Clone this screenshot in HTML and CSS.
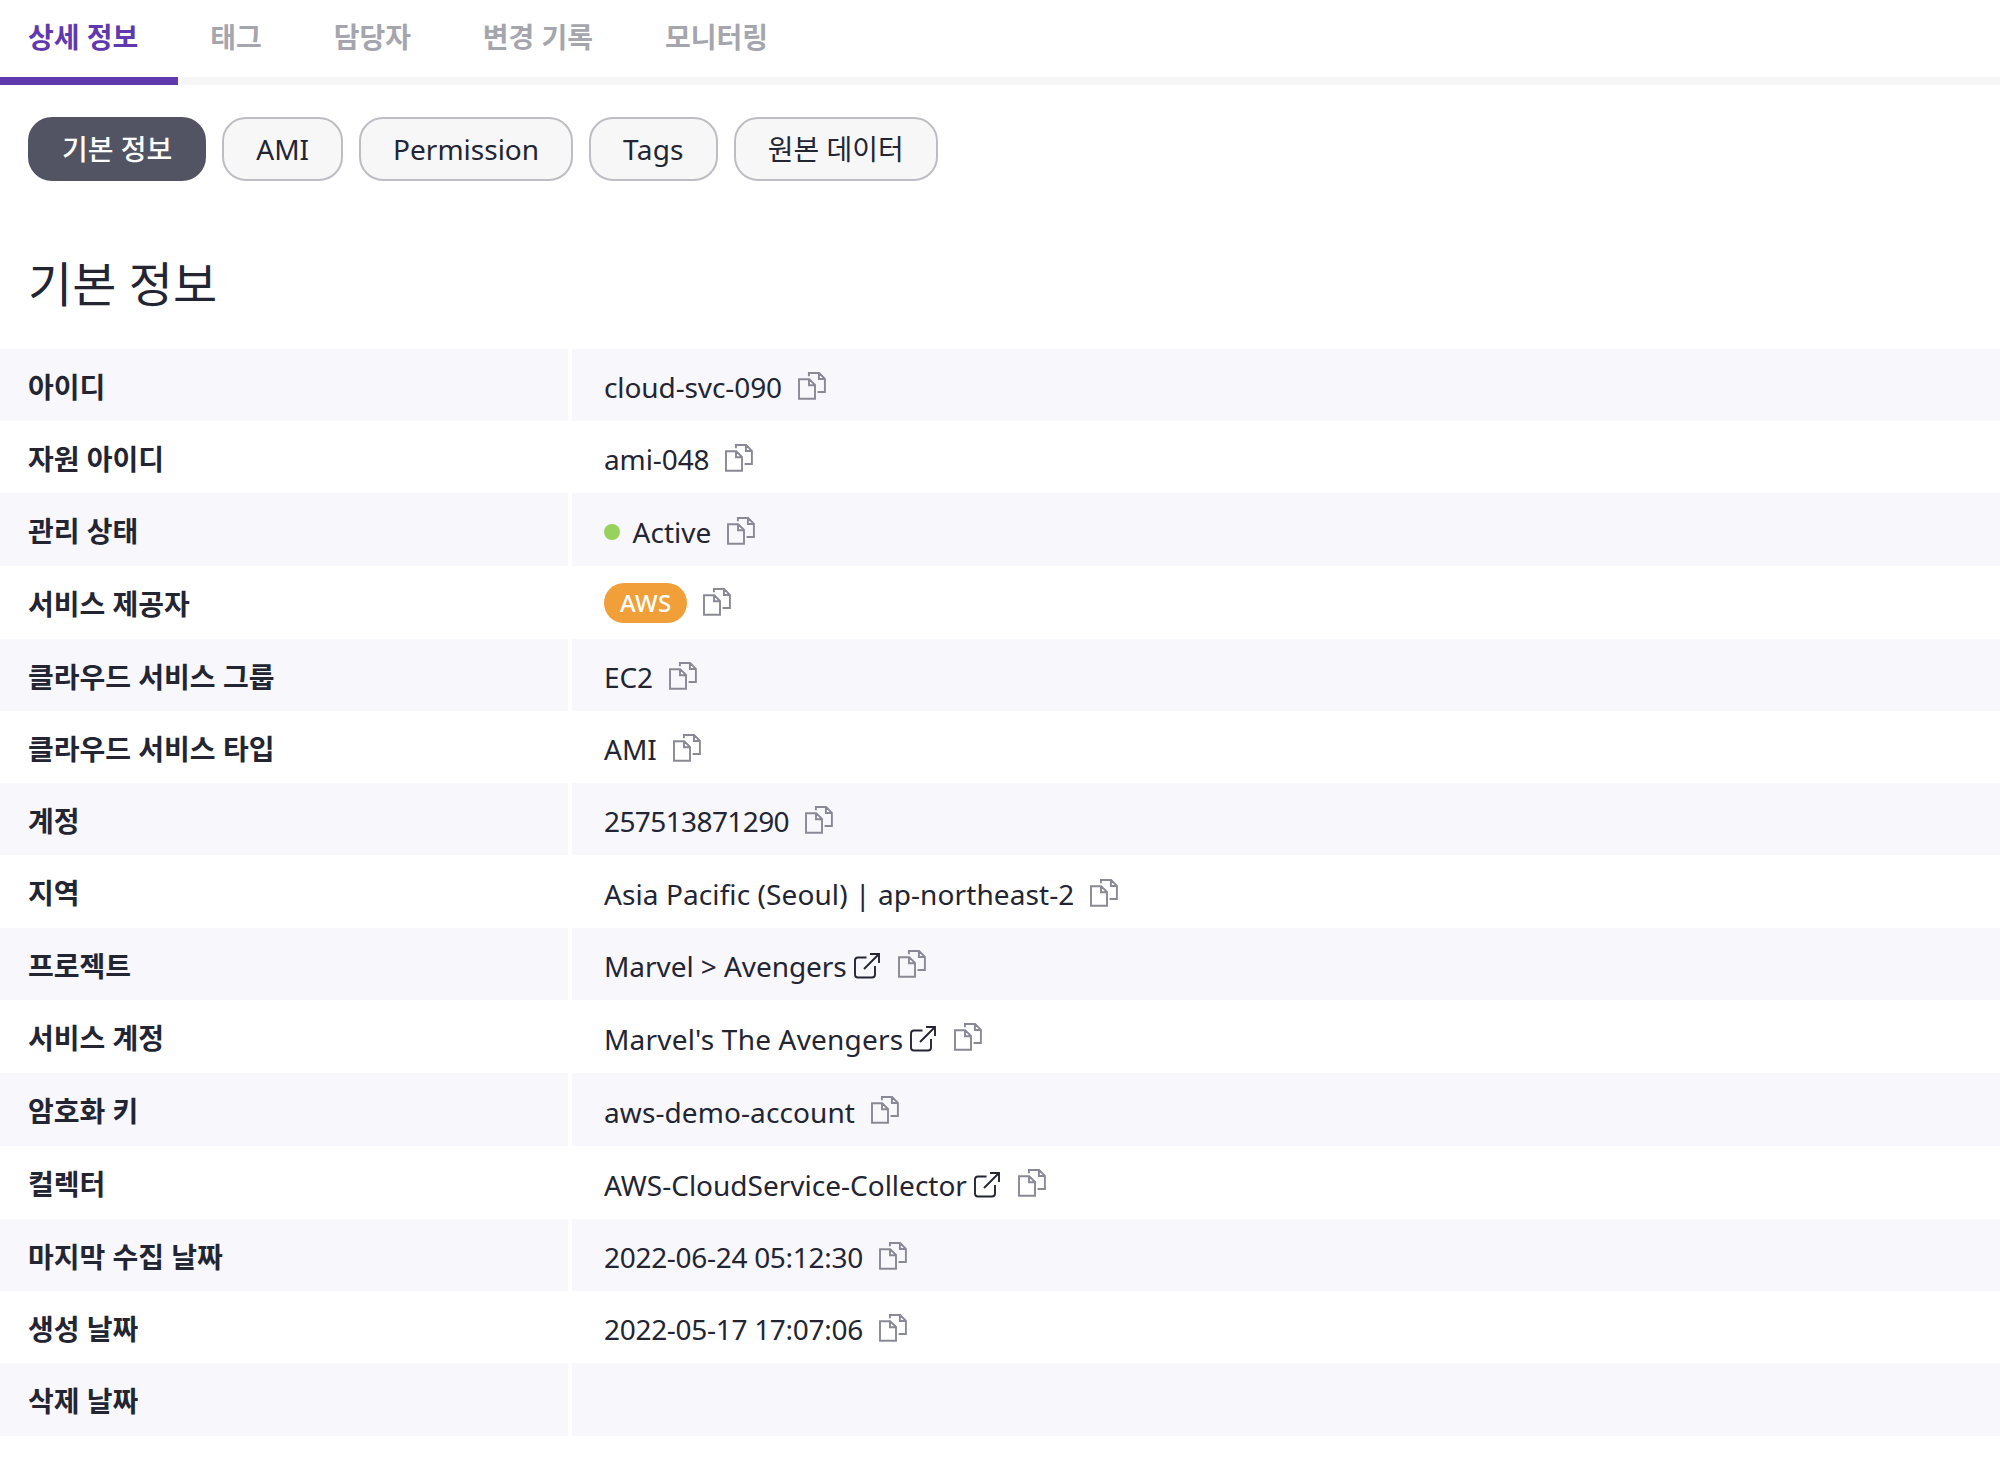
FILE: index.html
```html
<!DOCTYPE html>
<html lang="ko">
<head>
<meta charset="utf-8">
<title>기본 정보</title>
<link rel="stylesheet" href="styles.css">
</head>
<body>
<svg class="sprite" aria-hidden="true">
  <symbol id="copy" viewBox="0 0 28 28">
    <path d="M10.9 4.3V1H21.1L26.9 6.8V20H19.6M20.9 1.3V7H26.6M1 7.2H11.2L17 13V26.7H1ZM11 7.5V13.2H16.7" fill="none" stroke="currentColor" stroke-width="1.9"/>
  </symbol>
  <symbol id="ext" viewBox="0 0 26 26">
    <path d="M12.5 4.5H4Q1 4.5 1 7.5V21.5Q1 24.5 4 24.5H18Q21 24.5 21 21.5V13M16 1H25V10M25 1L10 16" fill="none" stroke="currentColor" stroke-width="1.9"/>
  </symbol>
</svg>
<nav class="tabs">
  <a class="tab active">상세 정보</a><a class="tab">태그</a><a class="tab">담당자</a><a class="tab">변경 기록</a><a class="tab">모니터링</a>
</nav>
<div class="pills">
  <button class="pill selected">기본 정보</button>
  <button class="pill">AMI</button>
  <button class="pill">Permission</button>
  <button class="pill tags">Tags</button>
  <button class="pill">원본 데이터</button>
</div>
<h1 class="title">기본 정보</h1>
<dl class="table">
  <div class="row"><dt>아이디</dt><dd><span class="mixed">cloud-svc-090</span><svg class="copy"><use href="#copy"/></svg></dd></div>
  <div class="row"><dt>자원 아이디</dt><dd><span class="mixed">ami-048</span><svg class="copy"><use href="#copy"/></svg></dd></div>
  <div class="row tall"><dt>관리 상태</dt><dd><i class="dot"></i><span>Active</span><svg class="copy"><use href="#copy"/></svg></dd></div>
  <div class="row tall"><dt>서비스 제공자</dt><dd class="provider"><span class="badge">AWS</span><svg class="copy"><use href="#copy"/></svg></dd></div>
  <div class="row"><dt>클라우드 서비스 그룹</dt><dd><span class="mixed">EC2</span><svg class="copy"><use href="#copy"/></svg></dd></div>
  <div class="row"><dt>클라우드 서비스 타입</dt><dd><span>AMI</span><svg class="copy"><use href="#copy"/></svg></dd></div>
  <div class="row"><dt>계정</dt><dd><span class="number">257513871290</span><svg class="copy"><use href="#copy"/></svg></dd></div>
  <div class="row tall"><dt>지역</dt><dd><span class="wide">Asia Pacific (Seoul) | ap-northeast-2</span><svg class="copy"><use href="#copy"/></svg></dd></div>
  <div class="row"><dt>프로젝트</dt><dd class="raised"><span class="narrow">Marvel &gt; Avengers</span><svg class="ext"><use href="#ext"/></svg><svg class="copy"><use href="#copy"/></svg></dd></div>
  <div class="row tall"><dt>서비스 계정</dt><dd class="raised"><span class="wider">Marvel's The Avengers</span><svg class="ext"><use href="#ext"/></svg><svg class="copy"><use href="#copy"/></svg></dd></div>
  <div class="row tall"><dt>암호화 키</dt><dd class="raised"><span class="wide">aws-demo-account</span><svg class="copy"><use href="#copy"/></svg></dd></div>
  <div class="row tall"><dt>컬렉터</dt><dd class="raised"><span>AWS-CloudService-Collector</span><svg class="ext"><use href="#ext"/></svg><svg class="copy"><use href="#copy"/></svg></dd></div>
  <div class="row"><dt>마지막 수집 날짜</dt><dd><span class="date">2022-06-24 05:12:30</span><svg class="copy"><use href="#copy"/></svg></dd></div>
  <div class="row"><dt>생성 날짜</dt><dd><span class="date">2022-05-17 17:07:06</span><svg class="copy"><use href="#copy"/></svg></dd></div>
  <div class="row tall"><dt>삭제 날짜</dt><dd></dd></div>
</dl>
</body>
</html>
```

FILE: styles.css
```css
* { box-sizing: border-box; }
body {
  margin: 0;
  height: 1458px;
  overflow: hidden;
  background: #fff;
  color: #232533;
  font-family: "Noto Sans", "Noto Sans CJK KR", sans-serif;
  font-size: 28px;
}
.sprite { display: none; }
svg { flex: none; }
.tabs {
  display: flex;
  height: 85px;
  box-shadow: inset 0 -8px #f7f7f7;
}
.tab {
  padding: 0 40px 0 31.9px;
  line-height: 75px;
  font-weight: 700;
  color: #a5a5ad;
}
.tab.active {
  height: 85px;
  padding-left: 28px;
  color: #6039ae;
  border-bottom: 8px solid #6039ae;
}
.pills {
  display: flex;
  gap: 16px;
  padding: 32px 28px 0;
}
.pill {
  height: 64px;
  padding: 0 32px;
  border: 2px solid #bdbdc4;
  border-radius: 24px;
  background: #f7f7f7;
  color: #232533;
  font: inherit;
  line-height: 60px;
}
.pill.selected {
  background: #525463;
  border-color: #525463;
  color: #fff;
  font-weight: 500;
}
.pill.tags { letter-spacing: 0.25px; }
.title {
  margin: 0;
  height: 168px;
  padding: 68px 28px 0;
  font-size: 48px;
  font-weight: 400;
  line-height: 70px;
}
.table { margin: 0; }
.row { display: flex; gap: 4px; height: 72px; }
.tall { height: 73px; }
.row:nth-child(odd) dt, .row:nth-child(odd) dd { background: #f8f7fc; }
dt {
  width: 568px;
  padding: 0 28px;
  font-weight: 700;
  line-height: 76px;
}
dd {
  flex: 1;
  display: flex;
  align-items: flex-start;
  margin: 0;
  padding: 18px 32px 0;
  line-height: 40px;
}
.tall dd { padding-top: 19px; }
.tall .provider { padding-top: 17px; }
.mixed { letter-spacing: -0.1px; }
.number { letter-spacing: -0.6px; }
.date { letter-spacing: -0.3px; }
.narrow { letter-spacing: -0.06px; }
.wide { letter-spacing: 0.09px; }
.wider { letter-spacing: 0.2px; }
.copy { width: 28px; height: 28px; margin: 5px 0 0 16px; color: #898995; }
.raised .copy { margin-top: 4px; }
.ext { width: 26px; height: 26px; margin: 7px 0 0 7px; }
.ext + .copy { margin-left: 18px; }
.dot { width: 16px; height: 16px; margin: 12px 12.6px 0 0; border-radius: 50%; background: #98d15b; }
.dot ~ .copy { margin-left: 15.6px; }
.badge {
  height: 40px;
  padding: 0 16px;
  border-radius: 20px;
  background: #f19f38;
  color: #fff;
  font-size: 24px;
  font-weight: 500;
  letter-spacing: 0.3px;
}
```
